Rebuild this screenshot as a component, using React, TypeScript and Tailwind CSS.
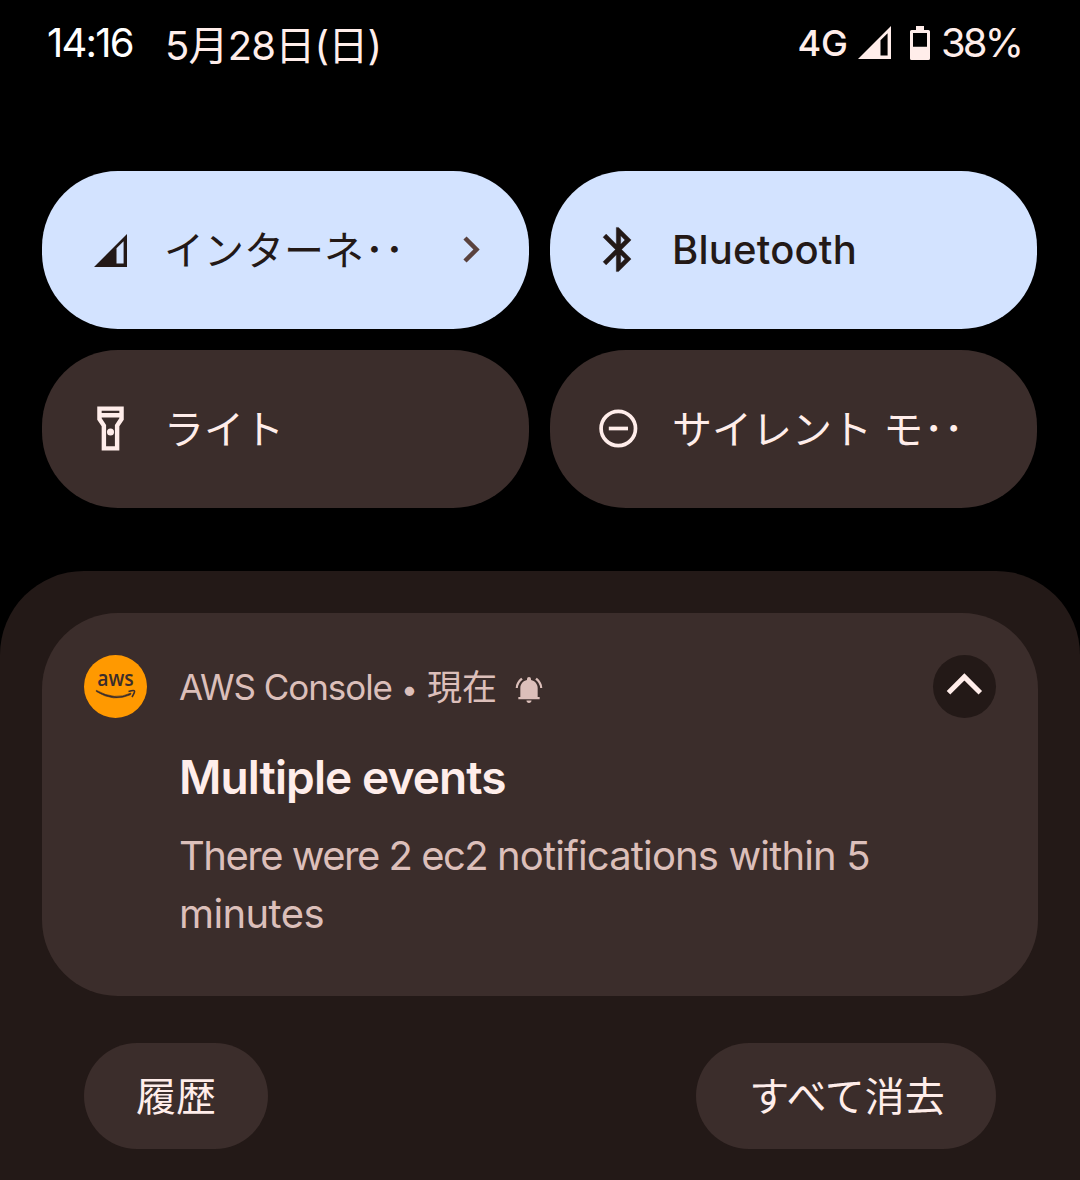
import type { ReactNode } from "react";

const font = "font-['Inter','Noto_Sans_CJK_JP',sans-serif]";

function SignalIcon() {
  return (
    <svg className="h-[33px] w-[33px]" viewBox="0 0 33 33" fill="currentColor">
      <path fillRule="evenodd" d="M0 33 33 0V33ZM22.5 14.3V29.6H29.6V7.2Z" />
    </svg>
  );
}

function BatteryIcon() {
  return (
    <svg className="h-[34px] w-5" viewBox="0 0 20 34" fill="currentColor">
      <path fillRule="evenodd" d="M6 0h8v4h4.4Q20 4 20 5.600V32.400Q20 34 18.400 34H1.600Q0 34 0 32.400V5.600Q0 4 1.600 4H6ZM3 7V20.700H17V7Z" />
    </svg>
  );
}

function BluetoothIcon() {
  return (
    <svg className="mb-[2px] h-[53px] w-[53px] shrink-0" viewBox="0 0 24 24" fill="currentColor">
      <path d="M17.71 7.71 12 2h-1v7.590L6.410 5 5 6.410 10.590 12 5 17.590 6.410 19 11 14.410V22h1l5.710-5.710-4.300-4.290 4.300-4.290zM13 5.830l1.880 1.880L13 9.590V5.830zm1.880 10.460L13 18.170v-3.760l1.880 1.880z" stroke="currentColor" strokeWidth=".15" />
    </svg>
  );
}

function FlashlightIcon() {
  return (
    <svg className="mb-[2px] h-[53px] w-[53px] shrink-0" viewBox="0 0 24 24" fill="currentColor">
      <path d="M18 2H6v6l2 3v11h8V11l2-3V2zm-2 2v1H8V4h8zm-2 6.400V20h-4v-9.600L8 7.400V7h8v.4l-2 3z" />
      <circle cx="12" cy="13.600" r="1.600" />
    </svg>
  );
}

function SilentIcon() {
  return (
    <svg className="h-[52.5px] w-[52.5px]" viewBox="0 0 52.5 52.5" fill="none" stroke="currentColor">
      <circle cx="26.300" cy="25.500" r="17.200" strokeWidth="3.700" />
      <path d="M16.800 25.500H36" strokeWidth="3.700" />
    </svg>
  );
}

function BellIcon() {
  return (
    <svg className="h-8 w-8" viewBox="0 0 24 24" fill="currentColor">
      <path d="M7.300 4.080 6.150 2.900C3.750 4.730 2.170 7.300 2.030 10.500h1.600a8.845 8.845 0 0 1 3.670-6.420zm13.070 6.420h1.600c-.15-3.200-1.730-5.770-4.120-7.600l-1.150 1.180a8.895 8.895 0 0 1 3.670 6.420z" />
      <path d="M18.500 10.500c0-3.070-2.140-5.340-5-6.020V3.700a1.500 1.500 0 0 0-3 0v.78C7.630 5.160 5.500 7.420 5.500 10.500V17.300H4v1.700h16v-1.700h-1.500zM12 21.800c1.100 0 1.900-.8 1.900-1.900h-3.800c0 1.100.8 1.900 1.900 1.900z" />
    </svg>
  );
}

function AwsIcon() {
  return (
    <svg className="h-[63px] w-[63px]" viewBox="0 0 63 63">
      <circle cx="31.500" cy="31.500" r="31.500" fill="#ff9900" />
      <text x="13.200" y="31.300" fontSize="22" textLength="36.500" lengthAdjust="spacingAndGlyphs" fill="#3b2d2b" className="font-['Open_Sans',sans-serif] font-semibold">aws</text>
      <path d="M12.300 35.300Q31 46 47 38L46.500 39.800Q29.500 47.500 12.300 36.500Z" fill="#3b2d2b" stroke="#3b2d2b" strokeWidth=".6" />
      <path d="M44.500 36.500Q50 35 50.500 36T48 42" fill="none" stroke="#3b2d2b" strokeWidth="1.600" />
    </svg>
  );
}

function TrailingDots() {
  return (
    <span className="relative -top-[2px]">
      <span className="inline-block w-[21px] text-center font-bold">·</span>
      <span className="inline-block w-[19px] text-center font-bold">·</span>
    </span>
  );
}

function Tile({ icon, active, children, trailing }: { icon: ReactNode; active?: boolean; children: ReactNode; trailing?: ReactNode }) {
  return (
    <div className={`flex h-[158px] items-center rounded-[76px] pl-[42px] ${active ? "bg-[#d3e3ff] text-[#231917]" : "bg-[#3b2d2b] text-[#ffedea]"}`}>
      <div className="flex h-[53px] w-[53px] shrink-0 items-center justify-center">{icon}</div>
      <div className="ml-[27px] flex-1 pt-[2px] text-[40px] leading-[58px] whitespace-nowrap">{children}</div>
      {trailing}
    </div>
  );
}

export default function App() {
  return (
    <div className={`flex h-[1180px] w-[1080px] flex-col overflow-hidden bg-black ${font}`}>
      <header className="flex h-[171px] items-start justify-between pr-[60px] pl-[47px] text-[40px] leading-[58px] whitespace-nowrap text-[#ffedea]">
        <div className="flex">
          <span className="mt-[14px] w-[118px] tracking-[-1.8px] text-white">14:16</span>
          <span className="mt-[17px] tracking-[-0.8px]">5月28日(日)</span>
        </div>
        <div className="flex">
          <span className="mt-[14px] text-[36px] font-medium">4G</span>
          <div className="mt-[26px] ml-[10px]"><SignalIcon /></div>
          <div className="mt-[26px] ml-[19px]"><BatteryIcon /></div>
          <span className="mt-[14px] ml-[11px] w-[79px] tracking-[-2.9px]">38%</span>
        </div>
      </header>

      <section className="grid grid-cols-2 gap-[21px] pr-[43px] pl-[42px]">
        <Tile
          active
          icon={<SignalIcon />}
          trailing={
            <svg className="mr-[46px] h-[30px] w-5" viewBox="0 0 20 30" fill="none" stroke="#5a423e" strokeWidth="4.500">
              <path d="M2 3 13.500 14.500 2 26" />
            </svg>
          }
        >
          インターネ<TrailingDots />
        </Tile>
        <Tile active icon={<BluetoothIcon />}>
          <div className="-mt-[3px] font-medium tracking-[0.2px]">Bluetooth</div>
        </Tile>
        <Tile icon={<FlashlightIcon />}>ライト</Tile>
        <Tile icon={<SilentIcon />}>サイレント モ<TrailingDots /></Tile>
      </section>

      <main className="mt-[63px] flex-1 rounded-t-[84px] bg-[#231917] px-[42px] pt-[42px]">
        <article className="h-[383px] rounded-[76px] bg-[#3b2d2b] px-[42px] pt-[42px]">
          <div className="flex h-[63px] items-center whitespace-nowrap text-[#dcbfba]">
            <AwsIcon />
            <span className="ml-[32px] pt-[3px] text-[35px] leading-[50px]">
              <span className="tracking-[-1.05px]">AWS Console</span>
              <span className="inline-block w-[35px] text-center text-[30px]">•</span>
              <span>現在</span>
            </span>
            <div className="mt-[6px] ml-[16px]"><BellIcon /></div>
            <div className="ml-auto flex h-[63px] w-[63px] items-center justify-center rounded-full bg-[#231917]">
              <svg className="h-[63px] w-[63px]" viewBox="0 0 63 63" fill="none" stroke="#ffedea" strokeWidth="5">
                <path d="M15.500 37.800 31.400 21.900 47.300 37.800" />
              </svg>
            </div>
          </div>
          <h2 className="mt-[26px] ml-[95px] text-[46px] leading-[66px] font-[560] tracking-[-0.9px] whitespace-nowrap text-[#ffedea]">Multiple events</h2>
          <p className="mt-[17px] ml-[95px] text-[40px] leading-[58px] tracking-[-0.85px] whitespace-nowrap text-[#dcbfba]">
            <span className="tracking-[-1.5px]">There were 2 ec2 </span>notifications within 5<br /><span className="tracking-[-0.6px]">minutes</span>
          </p>
        </article>
        <div className="mt-[47px] flex justify-between px-[42px] text-[40px] leading-[58px] text-[#ffedea]">
          <button className="h-[106px] w-[184px] rounded-full bg-[#3b2d2b] pt-[2px]">履歴</button>
          <button className="h-[106px] w-[300px] rounded-full bg-[#3b2d2b] pt-[2px] pl-[2px]">すべて消去</button>
        </div>
      </main>
    </div>
  );
}
